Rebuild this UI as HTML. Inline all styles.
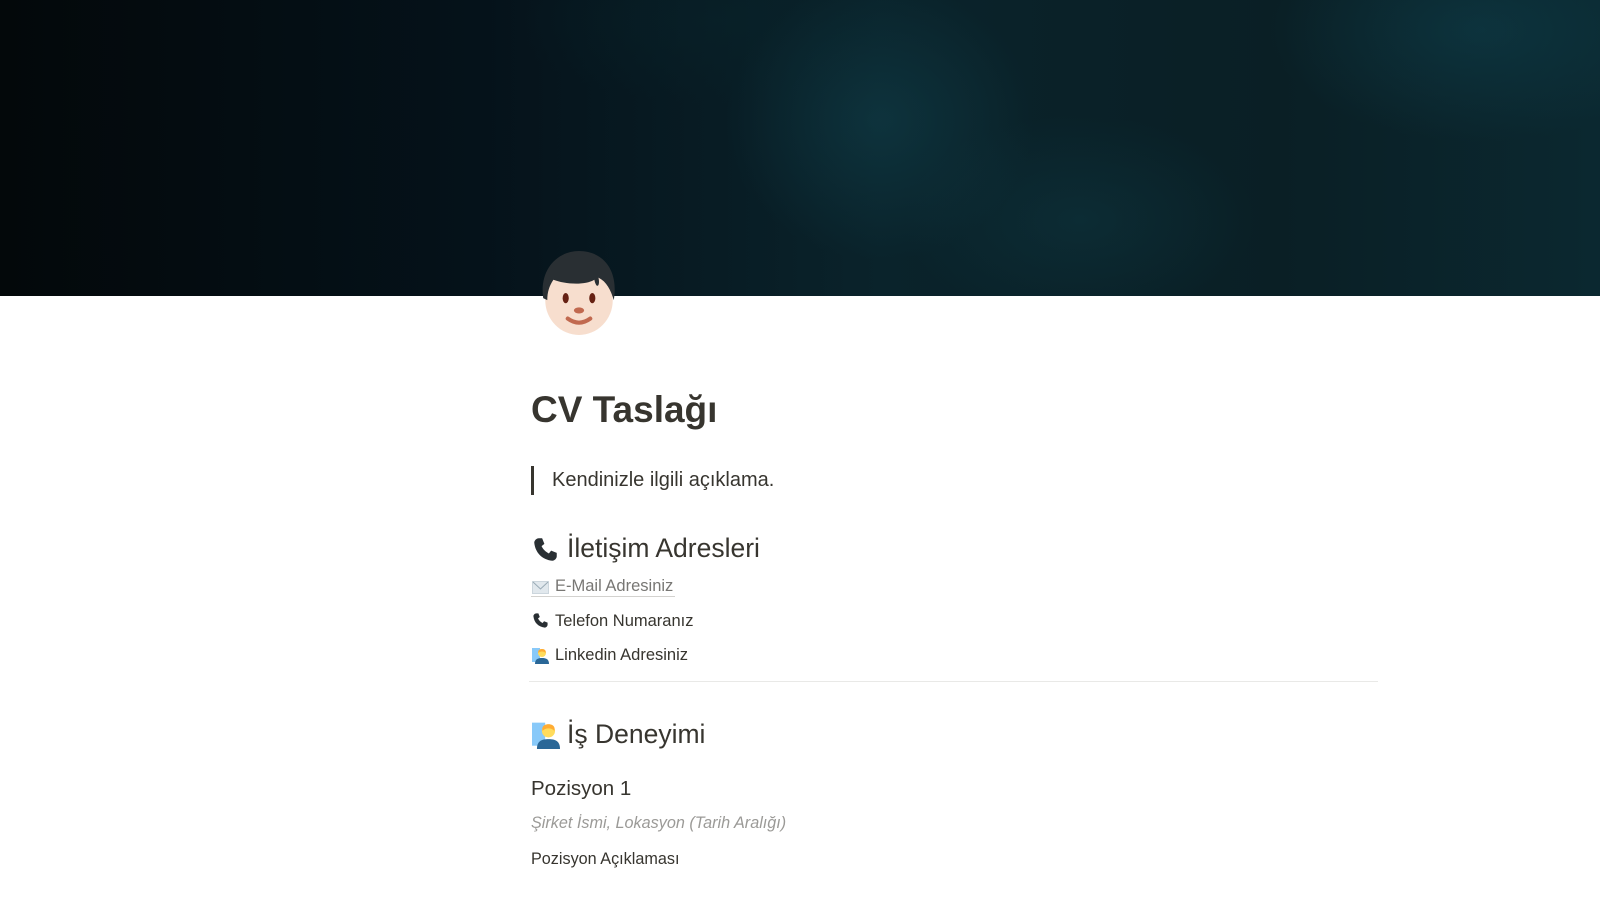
<!DOCTYPE html>
<html><head><meta charset="utf-8"><style>
*{margin:0;padding:0;box-sizing:border-box}
body{width:1600px;height:900px;overflow:hidden;background:#fff;font-family:"Liberation Sans",sans-serif;color:#37352f;position:relative}
.cover{position:absolute;left:0;top:0;width:1600px;height:296px;background:
radial-gradient(ellipse 220px 200px at 880px 120px,rgba(18,70,82,.45),transparent 70%),
radial-gradient(ellipse 300px 160px at 1480px 30px,rgba(15,65,78,.5),transparent 70%),
radial-gradient(ellipse 250px 150px at 1080px 220px,rgba(15,60,70,.4),transparent 70%),
radial-gradient(ellipse 300px 120px at 720px 20px,rgba(8,35,42,.5),transparent 70%),
linear-gradient(90deg,#03080a 0%,#05121a 30%,#0a232b 55%,#0a1f25 80%,#0b2830 100%)}
.a{position:absolute;white-space:nowrap}
.h2{font-size:26.5px;color:#37352f}
.li{font-size:16.5px;color:#37352f}
svg{display:block}
</style></head><body>
<div class="cover"></div>
<svg class="a" style="left:539px;top:249px" width="80" height="88" viewBox="0 0 78 86">
<ellipse cx="39" cy="50" rx="33" ry="34" fill="#f7dece"/>
<path d="M4 48 C0 20 18 2 39 2 C62 2 78 20 73 50 C70 40 66 32 58 28 C60 36 56 40 54 30 C44 36 24 34 14 30 C10 36 8 42 8 50 Z" fill="#292f33"/>
<ellipse cx="26" cy="48" rx="3" ry="5" fill="#662113"/>
<ellipse cx="52" cy="48" rx="3" ry="5" fill="#662113"/>
<ellipse cx="39" cy="60" rx="5" ry="3" fill="#c1694f"/>
<path d="M28 68 Q39 76 50 68" stroke="#c1694f" stroke-width="4" fill="none" stroke-linecap="round"/>
</svg>
<div class="a" style="left:531px;top:389px;font-size:37px;font-weight:bold;color:#37352f">CV Taslağı</div>
<div class="a" style="left:531px;top:466px;width:3px;height:29px;background:#37352f"></div>
<div class="a" style="left:552px;top:469px;font-size:20px">Kendinizle ilgili açıklama.</div>
<svg class="a" style="left:532px;top:536px" width="27" height="27" viewBox="0 0 24 24"><path d="M6 2 L9 2 L11 7 L8.5 9 C10 12 12 14 15 15.5 L17 13 L22 15 L22 18 C22 20 20 22 18 22 C9 21 3 15 2 6 C2 4 4 2 6 2Z" fill="#292f33"/></svg>
<div class="a h2" style="left:567px;top:533px">İletişim Adresleri</div>
<svg class="a" style="left:532px;top:581px" width="17" height="13" viewBox="0 0 17 13"><rect x=".5" y=".5" width="16" height="12" fill="#e1e8ed" stroke="#ccd6dd"/><path d="M1 1 L8.5 8 L16 1" stroke="#99aab5" fill="none"/></svg>
<div class="a li" style="left:555px;top:577px;color:#787774">E-Mail Adresiniz</div>
<div class="a" style="left:531px;top:596px;width:144px;height:1px;background:#d3d2cf"></div>
<svg class="a" style="left:532px;top:612px" width="17" height="17" viewBox="0 0 24 24"><path d="M6 2 L9 2 L11 7 L8.5 9 C10 12 12 14 15 15.5 L17 13 L22 15 L22 18 C22 20 20 22 18 22 C9 21 3 15 2 6 C2 4 4 2 6 2Z" fill="#292f33"/></svg>
<div class="a li" style="left:555px;top:612px">Telefon Numaranız</div>
<svg class="a" style="left:532px;top:647px" width="17" height="17" viewBox="0 0 17 17"><rect x="0" y="1" width="8" height="14" fill="#88c9f9"/><circle cx="10" cy="6" r="4" fill="#ffdc5d"/><path d="M10 2 C6 2 6 5 6.5 6 C8 4 12 4 13.5 6 C14 5 14 2 10 2Z" fill="#ffac33"/><path d="M3 17 C3 12 6 11 10 11 C14 11 17 12 17 17Z" fill="#2a6797"/></svg>
<div class="a li" style="left:555px;top:646px">Linkedin Adresiniz</div>
<div class="a" style="left:529px;top:681px;width:849px;height:1px;background:#e9e9e7"></div>
<svg class="a" style="left:532px;top:721px" width="28" height="28" viewBox="0 0 17 17"><rect x="0" y="1" width="8" height="14" fill="#88c9f9"/><circle cx="10" cy="6" r="4" fill="#ffdc5d"/><path d="M10 2 C6 2 6 5 6.5 6 C8 4 12 4 13.5 6 C14 5 14 2 10 2Z" fill="#ffac33"/><path d="M3 17 C3 12 6 11 10 11 C14 11 17 12 17 17Z" fill="#2a6797"/></svg>
<div class="a h2" style="left:567px;top:719px">İş Deneyimi</div>
<div class="a" style="left:531px;top:777px;font-size:20.5px">Pozisyon 1</div>
<div class="a li" style="left:531px;top:814px;font-style:italic;color:#9b9a97;font-size:16.2px">Şirket İsmi, Lokasyon (Tarih Aralığı)</div>
<div class="a li" style="left:531px;top:850px;font-size:16.2px">Pozisyon Açıklaması</div>
</body></html>
